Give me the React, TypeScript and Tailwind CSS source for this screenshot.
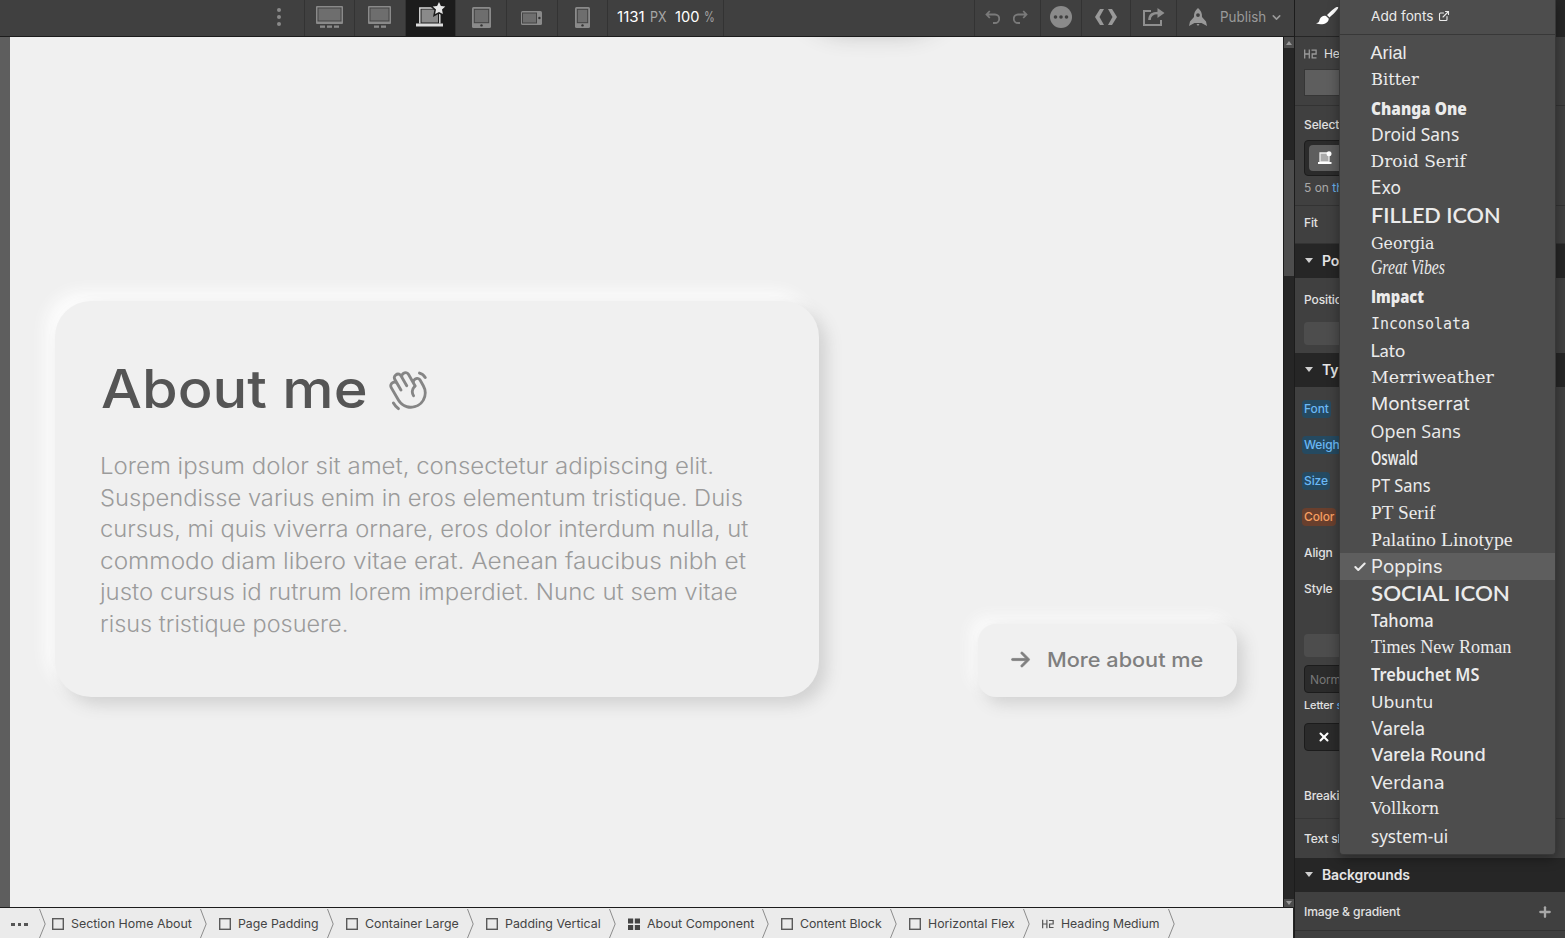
import { useLayoutEffect, useRef, useState, type ReactNode } from "react";
import { Check, ChevronDown, ExternalLink, Plus, X } from "lucide-react";
import { PiArrowRightBold, PiHandWaving } from "react-icons/pi";

const fonts = [
  { name: "Arial", width: 36, className: "font-['Liberation_Sans'] text-[18px]" },
  { name: "Bitter", width: 48, className: "font-['DejaVu_Serif'] text-[17px] -mt-[3px]" },
  { name: "Changa One", width: 96, className: "font-['Noto_Sans'] font-black text-[17px] mt-px" },
  { name: "Droid Sans", width: 88, className: "font-['Noto_Sans'] text-[18px]" },
  { name: "Droid Serif", width: 95, className: "font-['DejaVu_Serif'] text-[17px] -mt-px" },
  { name: "Exo", width: 30, className: "font-['Inter'] text-[18px] -mt-0.5" },
  { name: "FILLED ICON", width: 130, className: "font-['Lato'] font-semibold text-[21px] -mt-0.5" },
  { name: "Georgia", width: 63, className: "font-['DejaVu_Serif'] text-[16.5px] mt-px" },
  { name: "Great Vibes", width: 74, className: "font-['Liberation_Serif'] italic text-[20px] -mt-1" },
  { name: "Impact", width: 53, className: "font-['Open_Sans'] font-black text-[18px]" },
  { name: "Inconsolata", width: 99, className: "font-['DejaVu_Sans_Mono'] text-[16px] -mt-px" },
  { name: "Lato", width: 35, className: "font-['Lato'] text-[18px]" },
  { name: "Merriweather", width: 123, className: "font-['DejaVu_Serif'] text-[17px]" },
  { name: "Montserrat", width: 99, className: "font-['Inter'] text-[17.5px] -mt-[3px]" },
  { name: "Open Sans", width: 90, className: "font-['Open_Sans'] text-[18px]" },
  { name: "Oswald", width: 47, className: "font-['Open_Sans'] font-semibold text-[19px]" },
  { name: "PT Sans", width: 60, className: "font-['Noto_Sans'] text-[17.5px]" },
  { name: "PT Serif", width: 65, className: "font-['Liberation_Serif'] text-[19px]" },
  { name: "Palatino Linotype", width: 142, className: "font-['Liberation_Serif'] text-[19px]" },
  { name: "Poppins", width: 72, className: "font-['Inter'] text-[18px]" },
  { name: "SOCIAL ICON", width: 139, className: "font-['Lato'] font-semibold text-[21px] -mt-[3px]" },
  { name: "Tahoma", width: 63, className: "font-['Noto_Sans'] font-medium text-[17.5px]" },
  { name: "Times New Roman", width: 140, className: "font-['Liberation_Serif'] text-[18px]" },
  { name: "Trebuchet MS", width: 108, className: "font-['Noto_Sans'] font-semibold text-[17.5px]" },
  { name: "Ubuntu", width: 62, className: "font-['DejaVu_Sans'] text-[16.5px] mt-0.5" },
  { name: "Varela", width: 54, className: "font-['Inter'] text-[18px]" },
  { name: "Varela Round", width: 115, className: "font-['Inter'] font-medium text-[17.5px] -mt-[3px]" },
  { name: "Verdana", width: 74, className: "font-['DejaVu_Sans'] text-[17px] mt-0.5" },
  { name: "Vollkorn", width: 68, className: "font-['DejaVu_Serif'] text-[16px] -mt-[3px]" },
  { name: "system-ui", width: 77, className: "font-['Noto_Sans'] text-[17.5px]" },
];

const paragraph = [
  { text: "Lorem ipsum dolor sit amet, consectetur adipiscing elit.", width: 614 },
  { text: "Suspendisse varius enim in eros elementum tristique. Duis", width: 643 },
  { text: "cursus, mi quis viverra ornare, eros dolor interdum nulla, ut", width: 648 },
  { text: "commodo diam libero vitae erat. Aenean faucibus nibh et", width: 646 },
  { text: "justo cursus id rutrum lorem imperdiet. Nunc ut sem vitae", width: 638 },
  { text: "risus tristique posuere.", width: 248 },
];

const crumbs = [
  { label: "Section Home About", icon: "box", width: 121, gap: "pl-1.5" },
  { label: "Page Padding", icon: "box", width: 81, gap: "pl-3" },
  { label: "Container Large", icon: "box", width: 94, gap: "pl-3" },
  { label: "Padding Vertical", icon: "box", width: 96, gap: "pl-3" },
  { label: "About Component", icon: "grid", width: 107, gap: "pl-3" },
  { label: "Content Block", icon: "box", width: 82, gap: "pl-3" },
  { label: "Horizontal Flex", icon: "box", width: 87, gap: "pl-3" },
  { label: "Heading Medium", icon: "h2", width: 99, gap: "pl-3" },
];

// One line of text that always takes up the given width
function FitText({ width, children }: { width: number; children: string }) {
  const ref = useRef<HTMLSpanElement>(null);
  const [scale, setScale] = useState(1);

  useLayoutEffect(() => {
    if (ref.current) setScale(width / ref.current.offsetWidth);
  }, [width, children]);

  return (
    <span className="block shrink-0 whitespace-nowrap" style={{ width }}>
      <span ref={ref} className="inline-block origin-left" style={{ transform: `scaleX(${scale})` }}>
        {children}
      </span>
    </span>
  );
}

function H2Icon({ className }: { className: string }) {
  return (
    <svg width="13" height="10" viewBox="0 0 13 10" fill="none" strokeWidth="1.3" className={className}>
      <path d="M.7 .5v9M5.3 .5v9M.7 5h4.6M7.5 1.2h4.6V5H8.2v3.8h4.3" />
    </svg>
  );
}

function DesktopIcon({ width, feet }: { width: number; feet: number[] }) {
  return (
    <svg width={width} height="23" viewBox={`0 0 ${width} 23`}>
      <rect width={width} height="18" rx="1" fill="#8a8a8a" />
      <rect x="1.5" y="1.5" width={width - 3} height="14" fill="#444" />
      <rect x="2.5" y="2.5" width={width - 5} height="12" fill="#6e6e6e" />
      {feet.map((x) => (
        <rect key={x} x={x} y="19.5" width="5" height="2.3" fill="#8a8a8a" />
      ))}
    </svg>
  );
}

function LaptopIcon() {
  return (
    <svg width="30" height="26" viewBox="0 0 30 26">
      <path d="M3.800 21.5V6h20v15.500" fill="none" stroke="#d6d6d6" strokeWidth="1.5" />
      <rect x="5.500" y="7.500" width="16.500" height="13" fill="#8a8a8a" />
      <rect y="21.5" width="27" height="3" fill="#dcdcdc" />
      <path
        d="M23 0l1.9 4.1 4.4.5-3.3 3 .9 4.5L23 9.9l-3.9 2.2.9-4.5-3.3-3 4.4-.5z"
        fill="#e6e6e6"
        stroke="#1c1c1c"
        strokeWidth="3"
        paintOrder="stroke"
      />
    </svg>
  );
}

function TabletIcon({ width }: { width: number }) {
  return (
    <svg width={width} height="21" viewBox={`0 0 ${width} 21`}>
      <rect width={width} height="21" rx="1.5" fill="#8a8a8a" />
      <rect x="1.8" y="1.8" width={width - 3.6} height="14.4" fill="#444" />
      <rect x="2.8" y="2.8" width={width - 5.6} height="12.4" fill="#6e6e6e" />
      <circle cx={width / 2} cy="18.4" r="1.2" fill="#333" />
    </svg>
  );
}

function LandscapeIcon() {
  return (
    <svg width="21" height="14" viewBox="0 0 21 14">
      <rect width="21" height="14" rx="1.5" fill="#8a8a8a" />
      <rect x="1" y="1.5" width="15" height="11" fill="#444" />
      <rect x="2" y="2.5" width="13" height="9" fill="#6e6e6e" />
      <circle cx="18.4" cy="7" r="1.2" fill="#333" />
    </svg>
  );
}

function UndoIcon({ className = "" }: { className?: string }) {
  return (
    <svg width="15" height="15" viewBox="0 0 15 15" fill="none" stroke="#7a7a7a" strokeWidth="1.8" className={className}>
      <path d="M1.500 4.500h8.500a4.200 4.200 0 010 8.500H8M4.800 1L1.500 4.500l3.300 3.500" />
    </svg>
  );
}

function Cell({ className, children }: { className: string; children?: ReactNode }) {
  return (
    <div className={`flex h-9 shrink-0 items-center border-l border-[#333] ${className}`}>{children}</div>
  );
}

function TopBar() {
  return (
    <header className="flex h-[37px] shrink-0 border-b border-[#1c1c1c] bg-[#404040] text-[14px]">
      <div className="flex w-[304px] shrink-0 flex-col items-end justify-center gap-[3px] pr-[23px] pb-0.5">
        <i className="size-1 rounded-full bg-[#8a8a8a]" />
        <i className="size-1 rounded-full bg-[#8a8a8a]" />
        <i className="size-1 rounded-full bg-[#8a8a8a]" />
      </div>
      <Cell className="w-[50px] justify-center pb-0.5"><DesktopIcon width={27} feet={[4, 11, 18]} /></Cell>
      <Cell className="w-[51px] justify-center pr-0.5 pb-0.5"><DesktopIcon width={23} feet={[6, 13]} /></Cell>
      <Cell className="w-[50px] justify-center bg-[#1c1c1c] pb-[7px] pl-px"><LaptopIcon /></Cell>
      <Cell className="w-[51px] justify-center pb-0.5"><TabletIcon width={19} /></Cell>
      <Cell className="w-[51px] justify-center pr-px pb-px"><LandscapeIcon /></Cell>
      <Cell className="w-[50px] justify-center pb-0.5"><TabletIcon width={15} /></Cell>
      <Cell className="w-[116px] pb-[3px] pl-[9px]">
        <span className="text-white"><FitText width={28}>1131</FitText></span>
        <span className="ml-[5px] text-[#a6a6a6]"><FitText width={17}>PX</FitText></span>
        <span className="ml-2 text-white"><FitText width={24}>100</FitText></span>
        <span className="ml-[5px] text-[#a6a6a6]"><FitText width={11}>%</FitText></span>
      </Cell>
      <Cell className="w-[251px]" />
      <Cell className="w-[66px] gap-[13px] pb-0.5 pl-2.5">
        <UndoIcon />
        <UndoIcon className="-scale-x-100" />
      </Cell>
      <Cell className="w-[41px] justify-center pb-0.5">
        <svg width="22" height="22" viewBox="0 0 22 22">
          <circle cx="11" cy="11" r="11" fill="#8a8a8a" />
          <g fill="#404040">
            <circle cx="5.5" cy="11" r="1.8" />
            <circle cx="11" cy="11" r="1.8" />
            <circle cx="16.5" cy="11" r="1.8" />
          </g>
        </svg>
      </Cell>
      <Cell className="w-[49px] justify-center pb-0.5">
        <svg width="22" height="16" viewBox="0 0 22 16" fill="#999">
          <path d="M5 0h4L4.5 8 9 16H5L0 8zM17 0h-4l4.500 8L13 16h4l5-8z" />
        </svg>
      </Cell>
      <Cell className="w-[46px] justify-center pb-0.5">
        <svg width="22" height="18" viewBox="0 0 22 18" fill="none" stroke="#8f8f8f" strokeWidth="2">
          <path d="M8 3H1v14h17v-5" />
          <path d="M6.500 12c0-5 3-7 8.500-7" strokeWidth="2.6" />
          <path d="M14.500 0L21.500 5l-7 5z" fill="#8f8f8f" stroke="none" />
        </svg>
      </Cell>
      <Cell className="w-[118px] pb-0.5 pl-3 text-[#9a9a9a]">
        <svg width="18" height="18" viewBox="0 0 18 18" fill="#999">
          <path
            fillRule="evenodd"
            d="M9 0c3 2.500 4.200 5 4 9l4 4.500 1 4.500-5.500-3h-7L0 18l1-4.500L5 9c-.2-4 1-6.500 4-9zm0 5.200a1.900 1.900 0 100 3.800 1.900 1.900 0 000-3.800zM7.500 16h3L9 18z"
          />
        </svg>
        <span className="-mt-px ml-[13px]"><FitText width={46}>Publish</FitText></span>
        <ChevronDown className="ml-1" size={13} strokeWidth={2.8} />
      </Cell>
    </header>
  );
}

function Canvas() {
  return (
    <main className="flex h-[870px] shrink-0">
      <div className="w-2.5 shrink-0 bg-[#5e5e5e]" />
      <div className="relative w-[1273px] overflow-hidden bg-[#f0f0f0]">
        {/* Shadow of the block scrolled out above */}
        <div className="absolute -top-[110px] left-[785px] h-[105px] w-[160px] rounded-full shadow-[0_0_24px_#b4b4b4]" />
        <div className="flex items-end pt-[264px] pl-[45px]">
          <section className="h-[396px] w-[764px] rounded-[36px] bg-[#f0f0f0] pt-[55px] pl-[45px] shadow-[8px_8px_16px_#d2d2d2,-9px_-9px_16px_#fdfdfd]">
            <div className="flex items-center text-[53px] leading-[66px] font-medium text-[#555]">
              <span className="ml-px"><FitText width={267}>About me</FitText></span>
              <PiHandWaving size={46} className="mt-0.5 ml-[17px] text-[#858585]" />
            </div>
            <div className="pt-[28px] text-[22.5px] leading-[31.5px] font-light text-[#9b9b9b]">
              {paragraph.map((line) => (
                <FitText key={line.text} width={line.width}>{line.text}</FitText>
              ))}
            </div>
          </section>
          <button className="ml-[159px] flex h-[73px] w-[259px] items-center rounded-[18px] bg-[#f0f0f0] pb-0.5 pl-[31px] text-left text-[20px] font-medium text-[#7f7f7f] shadow-[7px_7px_16px_#d2d2d2,-8px_-8px_14px_#fafafa]">
            <PiArrowRightBold size={23} stroke="currentColor" strokeWidth={9} className="mr-[15px] shrink-0" />
            <FitText width={156}>More about me</FitText>
          </button>
        </div>
      </div>
      <div className="flex w-[11px] flex-col items-center border-l border-[#1c1c1c] bg-[#262626]">
        <div className="flex h-[11px] w-full items-center justify-center bg-[#4d4d4d]">
          <i className="border-x-[3px] border-b-4 border-x-transparent border-b-[#999]" />
        </div>
        <div className="mt-28 h-[116px] w-full bg-[#4d4d4d]" />
        <div className="mt-auto flex h-2 w-full items-center justify-center bg-[#4d4d4d]">
          <i className="border-x-[3px] border-t-4 border-x-transparent border-t-[#999]" />
        </div>
      </div>
    </main>
  );
}

function CrumbIcon({ type }: { type: string }) {
  if (type === "h2") return <H2Icon className="w-3 shrink-0 stroke-[#555]" />;
  if (type === "grid") {
    return (
      <svg width="12" height="12" viewBox="0 0 12 12" fill="#444" className="shrink-0">
        <path d="M0 .5h5.200v5H0zM6.800.5H12v5H6.800zM0 7h5.200v5H0zM6.800 7H12v5H6.800z" />
      </svg>
    );
  }
  return (
    <svg width="12" height="12" viewBox="0 0 12 12" fill="none" stroke="#5a5a5a" strokeWidth="1.4" className="shrink-0">
      <rect x=".7" y=".7" width="10.600" height="10.600" />
    </svg>
  );
}

function CrumbArrow() {
  return (
    <svg width="7" height="30" viewBox="0 0 7 30" fill="none" stroke="#8c8c8c" className="shrink-0">
      <path d="M.5 1l5.700 15L.5 30" />
    </svg>
  );
}

function Breadcrumbs() {
  return (
    <nav className="flex h-[31px] w-[1293px] items-center border-t border-[#1c1c1c] bg-[#ebebeb] text-[12px] text-[#444]">
      <div className="flex w-[39px] shrink-0 gap-[3px] pt-[3px] pl-[11px]">
        <i className="size-[3.5px] bg-[#555]" />
        <i className="size-[3.5px] bg-[#555]" />
        <i className="size-[3.5px] bg-[#555]" />
      </div>
      {crumbs.map((crumb) => (
        <div key={crumb.label} className="flex items-center">
          <CrumbArrow />
          <div className={`flex items-center gap-[7px] pt-0.5 pr-2 ${crumb.gap}`}>
            <CrumbIcon type={crumb.icon} />
            <FitText width={crumb.width}>{crumb.label}</FitText>
          </div>
        </div>
      ))}
      <CrumbArrow />
    </nav>
  );
}

function PanelHeader({ children }: { children: string }) {
  return (
    <h3 className="flex h-[34px] shrink-0 items-center bg-[#262626] pb-0.5 pl-2.5 text-[14px] font-semibold text-[#e6e6e6]">
      <i className="mr-[9px] border-x-[4.5px] border-t-[5px] border-x-transparent border-t-[#d0d0d0]" />
      {children}
    </h3>
  );
}

function Tag({ color, children }: { color: string; children: string }) {
  return (
    <div className="flex h-9 items-center">
      <span className={`-ml-0.5 rounded-sm px-0.5 leading-[18px] ${color}`}>{children}</span>
    </div>
  );
}

// The open font menu hides all but the first 35px of most labels
function StylePanel() {
  return (
    <aside className="flex w-[271px] shrink-0 flex-col overflow-hidden border-l border-[#1c1c1c] bg-[#404040] text-[12px] font-medium tracking-[-0.01em] whitespace-nowrap text-[#e2e2e2]">
      <div className="flex h-[37px] shrink-0 border-b border-[#262626]">
        <div className="w-[50px] pt-[7px] pl-[21px]">
          <svg width="23" height="18" viewBox="0 0 23 18" fill="#fff">
            <path d="M22 0c1.500 1.500-5 7.500-8.500 10.500L11 8C14.500 4.500 20.500-1.200 22 0zM10 9l2.700 2.500c.6 4.500-6.500 7.500-12.700 4.800 3-.3 3-1.500 3.700-4C5 9 8 8 10 9z" />
          </svg>
        </div>
        <div className="flex-1 bg-[#262626]" />
      </div>
      <div className="h-[69px] shrink-0 border-b border-[#333] px-[9px]">
        <div className="flex h-8 items-center gap-[7px] pt-px font-normal">
          <H2Icon className="stroke-[#999]" />
          He
        </div>
        <div className="h-[27px] border border-[#363636] bg-[#5e5e5e]" />
      </div>
      <div className="h-[100px] shrink-0 border-b border-[#333] px-[9px] pt-[9px]">
        <div className="w-[35px] overflow-hidden leading-5">Select</div>
        <div className="mt-[5px] h-9 rounded-sm border border-[#1c1c1c] bg-[#2b2b2b] p-1">
          <div className="flex h-[26px] w-16 items-center rounded-sm bg-[#5e5e5e] pl-2">
            <svg width="16" height="14" viewBox="0 0 16 14" fill="none">
              <path d="M10 2H3v9h9V5" fill="#aaa" stroke="#eee" strokeWidth="1.300" />
              <path d="M1 12h13.500" stroke="#fff" strokeWidth="2" />
              <circle cx="12" cy="2.800" r="2.500" fill="#fff" />
            </svg>
          </div>
        </div>
        <div className="w-[35px] overflow-hidden pt-0.5 leading-5 font-normal tracking-normal text-[#a8a8a8]">
          5 on <span className="text-[#6bb2ea]">th</span>
        </div>
      </div>
      <div className="flex h-[38px] shrink-0 items-center border-b border-[#333] px-[9px] pb-1">Fit</div>
      <PanelHeader>Po</PanelHeader>
      <div className="h-[75px] shrink-0 px-[9px] pt-3">
        <div className="w-[35px] overflow-hidden leading-5">Positic</div>
        <div className="mt-3 h-[23px] rounded-sm bg-[#4d4d4d]" />
      </div>
      <PanelHeader>Ty</PanelHeader>
      <div className="h-[432px] shrink-0 border-b border-[#363636] px-[9px] pt-1">
        <Tag color="bg-[#254a61] text-[#6bb8f5]">Font</Tag>
        <Tag color="bg-[#254a61] text-[#6bb8f5]">Weigh</Tag>
        <Tag color="bg-[#254a61] text-[#6bb8f5]">Size</Tag>
        <Tag color="bg-[#693f2d] text-[#f7a063]">Color</Tag>
        <Tag color="">Align</Tag>
        <Tag color="">Style</Tag>
        <div className="mt-[27px] h-[23px] rounded-sm bg-[#4d4d4d]" />
        <div className="mt-2 h-[28px] rounded-sm border border-[#1c1c1c] bg-[#2b2b2b] pl-[5px] leading-[27px] font-normal text-[#777]">
          Norm
        </div>
        <div className="mt-[3px] w-[35px] overflow-hidden text-[11px] leading-[18px]">
          Letter <span className="text-[#6bb8f5]">s</span>
        </div>
        <div className="mt-[9px] h-[28px] rounded-sm border border-[#1c1c1c] bg-[#2b2b2b] pt-[6px] pl-3">
          <X size={14} strokeWidth={3.5} className="text-white" />
        </div>
        <div className="w-[35px] overflow-hidden pt-[35px] leading-5">Breaki</div>
      </div>
      <div className="flex h-[39px] shrink-0 items-center px-[9px]">
        <span className="w-[35px] overflow-hidden">Text sl</span>
      </div>
      <PanelHeader>Backgrounds</PanelHeader>
      <div className="flex h-[39px] shrink-0 items-center justify-between border-b border-[#333] pt-0.5 pr-3 pl-[9px]">
        <FitText width={96}>Image &amp; gradient</FitText>
        <Plus size={16} strokeWidth={3.5} className="text-[#a8a8a8]" />
      </div>
    </aside>
  );
}

function FontMenu() {
  return (
    <div className="absolute top-0 left-[1339px] h-[855px] w-[217px] rounded-b border border-t-0 border-[#383838] bg-[#4d4d4d] text-[#ebebeb] shadow-[0_4px_12px_rgba(0,0,0,0.35)]">
      <div className="flex h-[35px] items-center border-b border-[#383838] pb-px pl-[31px] text-[13px]">
        <FitText width={62}>Add fonts</FitText>
        <ExternalLink size={12} strokeWidth={2.2} className="mb-0.5 ml-[5px]" />
      </div>
      <ul className="pt-[5px]">
        {fonts.map((font) => (
          <li
            key={font.name}
            className={`flex h-[27px] items-center ${font.name === "Poppins" ? "bg-[#5e5e5e]" : ""}`}
          >
            <span className="flex w-[30.5px] shrink-0 justify-end pr-1">
              {font.name === "Poppins" && <Check size={14} strokeWidth={3.5} />}
            </span>
            <span className={`leading-[27px] ${font.className}`}>
              <FitText width={font.width}>{font.name}</FitText>
            </span>
          </li>
        ))}
      </ul>
    </div>
  );
}

export default function App() {
  return (
    <div className="relative flex h-[938px] w-[1565px] overflow-hidden bg-[#262626] font-['Inter',sans-serif]">
      <div className="flex w-[1294px] shrink-0 flex-col">
        <TopBar />
        <Canvas />
        <Breadcrumbs />
      </div>
      <StylePanel />
      <FontMenu />
    </div>
  );
}
